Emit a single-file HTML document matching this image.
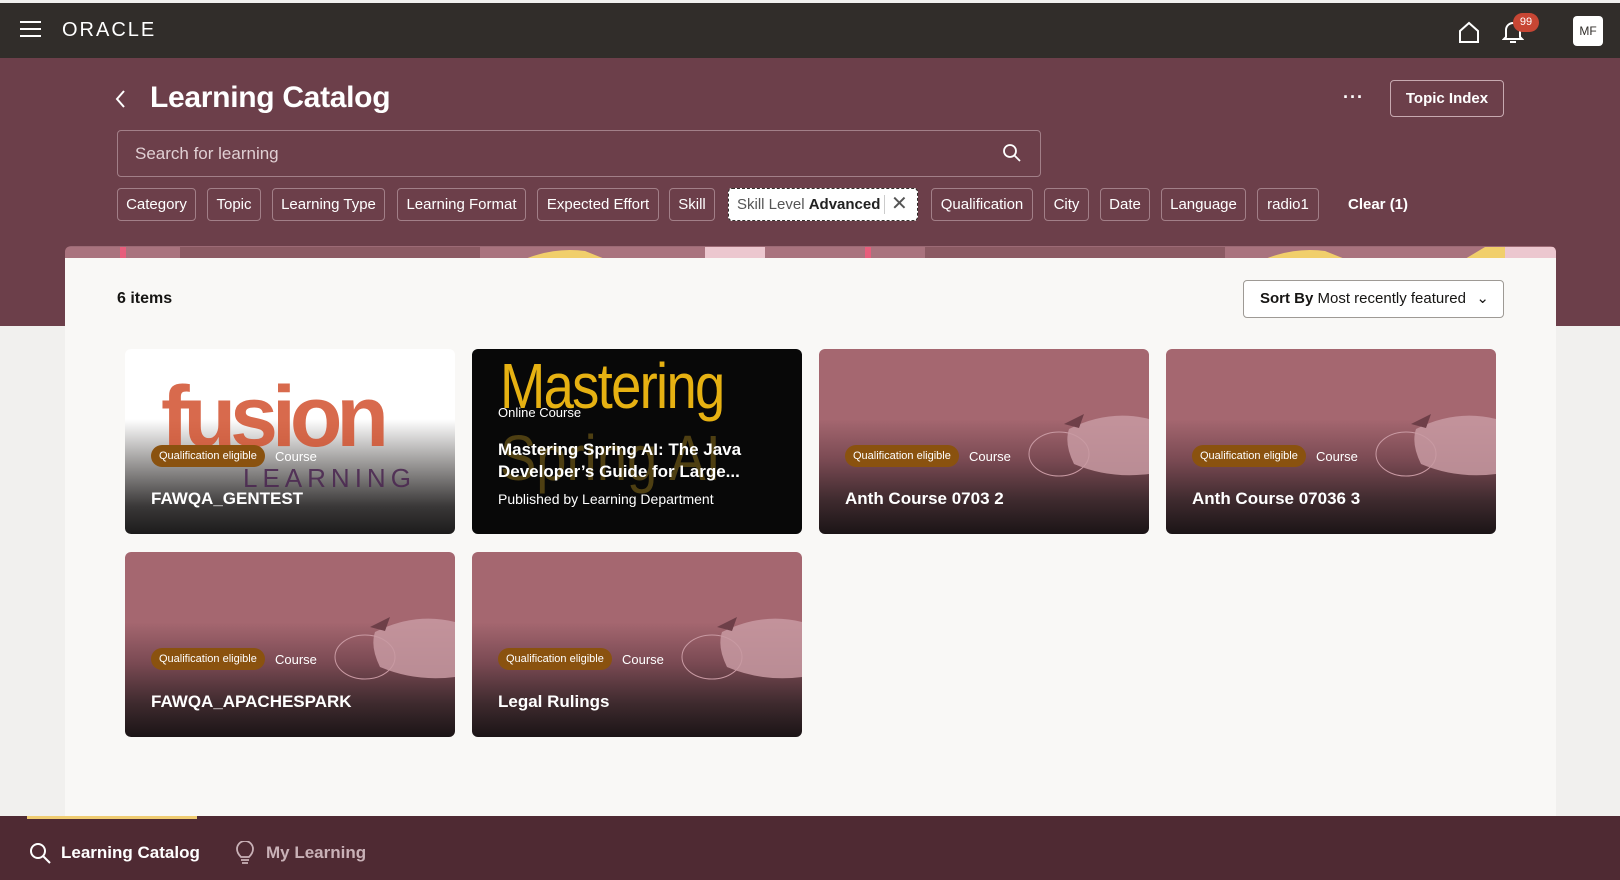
<!DOCTYPE html>
<html><head><meta charset="utf-8"><style>
*{box-sizing:border-box;margin:0;padding:0}
body{width:1620px;height:880px;overflow:hidden;font-family:"Liberation Sans",sans-serif;background:#f1f0ee;position:relative}
.abs{position:absolute}
.top{left:0;top:3px;width:1620px;height:55px;background:#312d2a}
.hdr{left:0;top:58px;width:1620px;height:268px;background:#6c3f4a}
.chip{position:absolute;top:188px;height:33px;border:1px solid #a27f88;border-radius:4px;color:#fff;font-size:15px;line-height:31px;text-align:center;white-space:nowrap}
.panel{left:65px;top:258px;width:1491px;height:558px;background:#f9f8f6}
.strip{left:65px;top:246px;width:1491px;height:12px;border-radius:6px 6px 0 0;overflow:hidden;background:#9c6a75}
.card{position:absolute;width:330px;height:185px;border-radius:6px;overflow:hidden;color:#fff}
.pink{background:linear-gradient(#a56770 0%,#a56770 38%,#7a4a53 60%,#3e2a2e 82%,#1b1416 100%)}
.badge{position:absolute;left:26px;top:96px;height:22px;padding:0 8px;border-radius:11px;background:#8a520f;font-size:11px;line-height:22px;white-space:nowrap}
.ctype{position:absolute;left:150px;top:100px;font-size:13px}
.ttl{position:absolute;left:26px;top:140px;font-size:17px;font-weight:bold;white-space:nowrap}
.fruit{position:absolute;right:0;top:65px;width:130px;height:70px}
.bnav{left:0;top:816px;width:1620px;height:64px;background:#4f2a33}
</style></head><body>
<div class="abs top"></div>
<div class="abs" style="left:20px;top:21px;width:21px;height:2px;background:#fff;box-shadow:0 7px 0 #fff,0 14px 0 #fff"></div>
<div class="abs" style="left:62px;top:19px;color:#fff;font-size:20px;letter-spacing:2px">ORACLE</div>
<svg class="abs" style="left:1457px;top:20px" width="24" height="24" viewBox="0 0 24 24"><path d="M3 11 L12 3 L21 11 V22 H3 Z" fill="none" stroke="#fff" stroke-width="2"/></svg>
<svg class="abs" style="left:1502px;top:19px" width="22" height="26" viewBox="0 0 22 26"><path d="M4 18 V11 a7 7 0 0 1 14 0 V18 L20 20 H2 Z" fill="none" stroke="#fff" stroke-width="2"/><path d="M8 23 h6" stroke="#fff" stroke-width="2"/></svg>
<div class="abs" style="left:1513px;top:13px;width:26px;height:19px;border-radius:10px;background:#c74634;color:#fff;font-size:11px;line-height:19px;text-align:center">99</div>
<div class="abs" style="left:1573px;top:16px;width:30px;height:30px;border-radius:4px;background:#fff;color:#312d2a;font-size:12px;line-height:30px;text-align:center">MF</div>

<div class="abs hdr"></div>
<svg class="abs" style="left:114px;top:89px" width="14" height="20" viewBox="0 0 14 20"><path d="M10 2 L3 10 L10 18" fill="none" stroke="#fff" stroke-width="2"/></svg>
<div class="abs" style="left:150px;top:81px;color:#fff;font-size:30px;font-weight:bold;letter-spacing:-0.3px">Learning Catalog</div>
<div class="abs" style="left:1343px;top:87px;color:#fff;font-size:18px;letter-spacing:1px;font-weight:bold">···</div>
<div class="abs" style="left:1390px;top:80px;width:114px;height:37px;border:1px solid #c7a9b0;border-radius:4px;color:#fff;font-size:15px;font-weight:bold;line-height:35px;text-align:center">Topic Index</div>
<div class="abs" style="left:117px;top:130px;width:924px;height:47px;border:1px solid #a27f88;border-radius:4px"></div>
<div class="abs" style="left:135px;top:144px;color:#e0cfd3;font-size:17px">Search for learning</div>
<svg class="abs" style="left:1002px;top:143px" width="20" height="20" viewBox="0 0 20 20"><circle cx="8" cy="8" r="6" fill="none" stroke="#fff" stroke-width="1.8"/><path d="M12.5 12.5 L18 18" stroke="#fff" stroke-width="1.8"/></svg>

<div class="chip" style="left:117px;width:79px">Category</div>
<div class="chip" style="left:207px;width:54px">Topic</div>
<div class="chip" style="left:272px;width:113px">Learning Type</div>
<div class="chip" style="left:397px;width:129px">Learning Format</div>
<div class="chip" style="left:537px;width:122px">Expected Effort</div>
<div class="chip" style="left:669px;width:46px">Skill</div>
<div class="chip" style="left:728px;width:190px;background:#fff;border:1.5px dashed #312d2a;color:#555;text-align:left;padding-left:8px">Skill Level <b style="color:#222">Advanced</b><span style="position:absolute;left:155px;top:6px;width:1px;height:19px;background:#ccc"></span><span style="position:absolute;left:162px;top:0;color:#555;font-size:20px">✕</span></div>
<div class="chip" style="left:931px;width:102px">Qualification</div>
<div class="chip" style="left:1044px;width:45px">City</div>
<div class="chip" style="left:1100px;width:50px">Date</div>
<div class="chip" style="left:1161px;width:85px">Language</div>
<div class="chip" style="left:1257px;width:62px">radio1</div>
<div class="abs" style="left:1348px;top:196px;color:#fff;font-size:15px;font-weight:bold">Clear (1)</div>

<div class="abs strip"><svg width="1491" height="12"><rect x="0" y="0" width="1491" height="12" fill="#a9737e"/><rect x="55" y="0" width="6" height="12" fill="#e75e7c"/><rect x="115" y="0" width="300" height="12" fill="#8b5a63"/><path d="M460 12 Q490 0 520 4 L540 12Z" fill="#f1cf6b"/><rect x="640" y="0" width="60" height="12" fill="#ecc7cf"/><path d="M910 12 L930 0 H950 L965 12Z" fill="#f1cf6b"/><rect x="800" y="0" width="6" height="12" fill="#e75e7c"/><rect x="860" y="0" width="300" height="12" fill="#8b5a63"/><path d="M1200 12 Q1230 0 1260 4 L1280 12Z" fill="#f1cf6b"/><path d="M1400 12 L1420 0 H1460 L1470 12Z" fill="#f1cf6b"/><rect x="1440" y="0" width="51" height="12" fill="#ecc7cf"/></svg></div>
<div class="abs panel"></div>
<div class="abs" style="left:117px;top:290px;color:#161513;font-size:16px;font-weight:bold">6 items</div>
<div class="abs" style="left:1243px;top:280px;width:261px;height:38px;border:1px solid #9e9a95;border-radius:4px;background:#fff;font-size:15px;line-height:36px;padding-left:16px;color:#161513"><b>Sort By</b> Most recently featured<span style="position:absolute;right:14px;top:0">⌄</span></div>

<div class="card" style="left:125px;top:349px;background:linear-gradient(#fff 0%,#fff 38%,#9a9897 62%,#3a3838 85%,#1c1b1b 100%)">
<div style="position:absolute;left:36px;top:18px;font-size:86px;font-weight:bold;letter-spacing:-6px;color:#d2512e;opacity:.85;line-height:100px">fusion</div>
<div style="position:absolute;left:118px;top:114px;font-size:26px;letter-spacing:5px;color:#4a2550;opacity:.85">LEARNING</div>
<div class="badge">Qualification eligible</div><div class="ctype">Course</div><div class="ttl">FAWQA_GENTEST</div></div>

<div class="card" style="left:472px;top:349px;background:#080808">
<div style="position:absolute;left:28px;top:0px;font-size:64px;color:#e6b112;letter-spacing:-2px;transform:scaleX(.85);transform-origin:left">Mastering</div>
<div style="position:absolute;left:28px;top:72px;font-size:64px;color:#4e3f12;transform:scaleX(.85);transform-origin:left">Spring AI</div>
<div style="position:absolute;left:26px;top:56px;font-size:13px">Online Course</div>
<div style="position:absolute;left:26px;top:90px;font-size:17px;font-weight:bold;line-height:22px">Mastering Spring AI: The Java<br>Developer’s Guide for Large...</div>
<div style="position:absolute;left:26px;top:142px;font-size:14px">Published by Learning Department</div></div>

<div class="card pink" style="left:819px;top:349px"><svg class="fruit" viewBox="0 0 130 70"><ellipse cx="40" cy="40" rx="30" ry="22" fill="none" stroke="#c99aa3" stroke-width="1"/><path d="M50 15 Q90 -5 130 5 V60 Q90 65 55 50 Q45 30 50 15Z" fill="#c89aa2" opacity=".85"/><path d="M45 10 L60 14 L65 0 Z" fill="#6e3f48"/></svg><div class="badge">Qualification eligible</div><div class="ctype">Course</div><div class="ttl">Anth Course 0703 2</div></div>
<div class="card pink" style="left:1166px;top:349px"><svg class="fruit" viewBox="0 0 130 70"><ellipse cx="40" cy="40" rx="30" ry="22" fill="none" stroke="#c99aa3" stroke-width="1"/><path d="M50 15 Q90 -5 130 5 V60 Q90 65 55 50 Q45 30 50 15Z" fill="#c89aa2" opacity=".85"/><path d="M45 10 L60 14 L65 0 Z" fill="#6e3f48"/></svg><div class="badge">Qualification eligible</div><div class="ctype">Course</div><div class="ttl">Anth Course 07036 3</div></div>
<div class="card pink" style="left:125px;top:552px"><svg class="fruit" viewBox="0 0 130 70"><ellipse cx="40" cy="40" rx="30" ry="22" fill="none" stroke="#c99aa3" stroke-width="1"/><path d="M50 15 Q90 -5 130 5 V60 Q90 65 55 50 Q45 30 50 15Z" fill="#c89aa2" opacity=".85"/><path d="M45 10 L60 14 L65 0 Z" fill="#6e3f48"/></svg><div class="badge">Qualification eligible</div><div class="ctype">Course</div><div class="ttl">FAWQA_APACHESPARK</div></div>
<div class="card pink" style="left:472px;top:552px"><svg class="fruit" viewBox="0 0 130 70"><ellipse cx="40" cy="40" rx="30" ry="22" fill="none" stroke="#c99aa3" stroke-width="1"/><path d="M50 15 Q90 -5 130 5 V60 Q90 65 55 50 Q45 30 50 15Z" fill="#c89aa2" opacity=".85"/><path d="M45 10 L60 14 L65 0 Z" fill="#6e3f48"/></svg><div class="badge">Qualification eligible</div><div class="ctype">Course</div><div class="ttl">Legal Rulings</div></div>

<div class="abs bnav"></div>
<div class="abs" style="left:27px;top:816px;width:170px;height:3px;background:#f0cc71"></div>
<svg class="abs" style="left:29px;top:842px" width="22" height="22" viewBox="0 0 22 22"><circle cx="9" cy="9" r="7" fill="none" stroke="#fff" stroke-width="2"/><path d="M14 14 L21 21" stroke="#fff" stroke-width="2"/></svg>
<div class="abs" style="left:61px;top:843px;color:#fff;font-size:17px;font-weight:bold">Learning Catalog</div>
<svg class="abs" style="left:236px;top:841px" width="18" height="24" viewBox="0 0 18 24"><path d="M5 16 Q1 12 1 8 a8 8 0 0 1 16 0 Q17 12 13 16 Z M5 19 h8 M6 22 h6" fill="none" stroke="#c9b1b7" stroke-width="1.8"/></svg>
<div class="abs" style="left:266px;top:843px;color:#c9b1b7;font-size:17px;font-weight:bold">My Learning</div>
</body></html>
